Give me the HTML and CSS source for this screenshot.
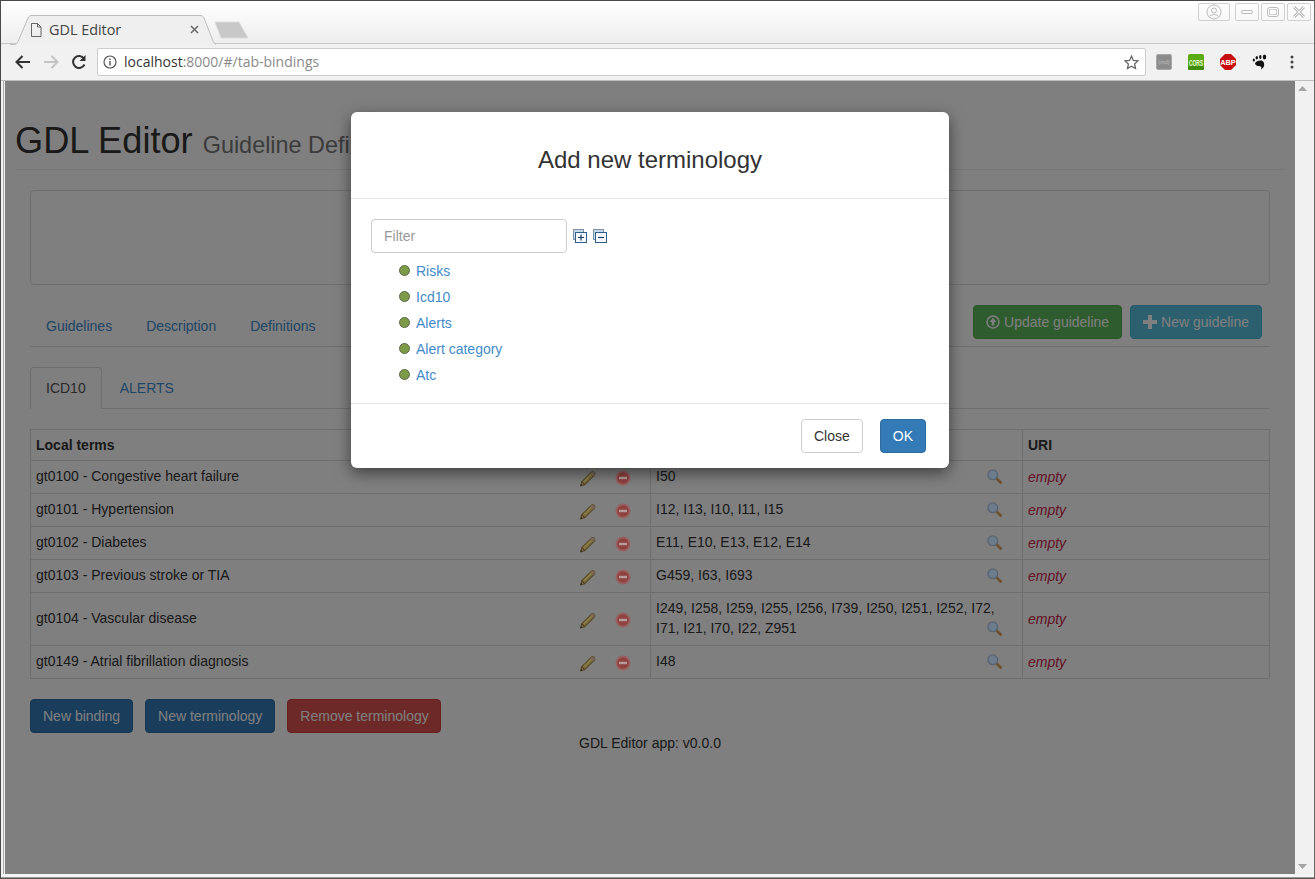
FILE: index.html
```html
<!DOCTYPE html>
<html lang="en">
<head>
    <meta charset="UTF-8">
    <meta name="viewport" content="width=device-width, initial-scale=1.0">
    <title>GDL Editor</title>
    <link rel="stylesheet" href="styles.css">
</head>
<body>
<div class="window">

    <div class="tabstrip">
        <div class="browser-tab">
            <svg class="tab-shape" width="206" height="30" viewBox="0 0 206 30"><path d="M0 29.500h4c2 0 3-1 4-3L18 3c1-2 2-2.500 4-2.500h168c2 0 3 .5 4 2.500l9 23c1 2 2 3.500 4 3.500" fill="#efefef" stroke="#bdbdbd"/></svg>
            <svg class="doc-icon" width="12" height="14" viewBox="0 0 12 14"><path d="M1.500.5h6l3.500 3.500v9.500h-9.500zM7.500.5v3.500h3.500" fill="none" stroke="#666"/></svg>
            <span class="tab-title">GDL Editor</span>
            <svg class="tab-close" width="9" height="9" viewBox="0 0 9 9"><path d="M1 1l7 7M8 1L1 8" stroke="#666" stroke-width="1.500"/></svg>
        </div>
        <svg class="new-tab" width="36" height="18" viewBox="0 0 36 18"><path d="M1 1h24l9 16H7z" fill="#c8c8c8" stroke="#dcdcdc"/></svg>
        <div class="win-controls">
            <div class="win-btn win-profile">
                <svg width="16" height="16" viewBox="0 0 16 16"><circle cx="8" cy="8" r="7" fill="none" stroke="#bbb"/><circle cx="8" cy="6.500" r="2.500" fill="none" stroke="#bbb"/><path d="M3.500 12.500c1-2.500 8-2.500 9 0" fill="none" stroke="#bbb"/></svg>
            </div>
            <div class="win-btn">
                <svg width="12" height="6" viewBox="0 0 12 6"><rect x=".5" y="1.500" width="11" height="3" rx="1.500" fill="none" stroke="#bbb"/></svg>
            </div>
            <div class="win-btn">
                <svg width="12" height="10" viewBox="0 0 12 10"><rect x=".5" y=".5" width="11" height="9" rx="2" fill="none" stroke="#bbb"/><rect x="2.500" y="2.500" width="7" height="5" fill="none" stroke="#ccc"/></svg>
            </div>
            <div class="win-btn">
                <svg width="12" height="12" viewBox="0 0 12 12"><path d="M1 1l10 10M11 1L1 11" stroke="#bbb" stroke-width="3"/><path d="M1 1l10 10M11 1L1 11" stroke="#fff" stroke-width="1"/></svg>
            </div>
        </div>
    </div>

    <div class="toolbar">
        <svg class="nav-icon" width="16" height="14" viewBox="0 0 16 14"><path d="M15 7H2M7.500 1L1.500 7l6 6" fill="none" stroke="#333" stroke-width="2"/></svg>
        <svg class="nav-icon" width="16" height="14" viewBox="0 0 16 14"><path d="M1 7h13M8.500 1l6 6-6 6" fill="none" stroke="#c4c4c4" stroke-width="2"/></svg>
        <svg class="nav-icon" width="16" height="16" viewBox="0 0 16 16"><path d="M13.500 10.500A6 6 0 1 1 13 4.500" fill="none" stroke="#333" stroke-width="2"/><path d="M14.500 1v6h-6z" fill="#333"/></svg>
        <div class="omnibox">
            <svg width="14" height="14" viewBox="0 0 14 14"><circle cx="7" cy="7" r="6" fill="none" stroke="#555" stroke-width="1.200"/><path d="M7 6v4.500M7 3.500v1.500" stroke="#555" stroke-width="1.400"/></svg>
            <span class="url"><span class="url-host">localhost</span>:8000/#/tab-bindings</span>
            <svg class="star" width="15" height="15" viewBox="0 0 15 15"><path d="M7.500 1.200l1.900 4.200 4.600.5-3.400 3.100.9 4.500-4-2.300-4 2.300.9-4.500L1 5.900l4.600-.5z" fill="none" stroke="#666" stroke-width="1.300"/></svg>
        </div>
        <div class="extensions">
            <svg width="16" height="16" viewBox="0 0 16 16"><rect width="15" height="15" x=".5" y=".5" rx="1.500" fill="#8c8c8c" stroke="#a8a8a8"/><text x="8" y="10" font-size="5.500" text-anchor="middle" fill="#bdbdbd" font-family="Liberation Sans">(md)</text></svg>
            <svg width="16" height="16" viewBox="0 0 16 16"><rect width="16" height="16" rx="2" fill="#5cab12"/><rect y="12" width="16" height="4" rx="1" fill="#418c08"/><text transform="translate(8 11.500) scale(.58 1)" font-size="8.500" font-weight="bold" text-anchor="middle" fill="#e8f5d8" font-family="Liberation Sans">CORS</text></svg>
            <svg width="16" height="16" viewBox="0 0 16 16"><path d="M5 0h6l5 5v6l-5 5H5l-5-5V5z" fill="#c70d0d"/><text x="8" y="11" font-size="7.400" font-weight="bold" text-anchor="middle" fill="#fff" font-family="Liberation Sans">ABP</text></svg>
            <svg width="16" height="16" viewBox="0 0 16 16"><path d="M3 9.500c1-3 7-4 8.500-1.500 1.500 3 .5 6-2.500 7.500 1-2 0-3.500-2-3.500-1.500 0-3.500-.5-4-2.500z" fill="#111"/><ellipse cx="1.800" cy="6" rx="1.100" ry="1.500" fill="#111"/><ellipse cx="4.800" cy="3.800" rx="1.200" ry="1.700" fill="#111"/><ellipse cx="8.300" cy="3" rx="1.200" ry="1.900" fill="#111"/><ellipse cx="12.500" cy="3" rx="1.700" ry="2.500" fill="#111"/></svg>
            <svg width="16" height="16" viewBox="0 0 16 16"><circle cx="8" cy="3" r="1.500" fill="#444"/><circle cx="8" cy="8" r="1.500" fill="#444"/><circle cx="8" cy="13" r="1.500" fill="#444"/></svg>
        </div>
    </div>

    <div class="content-row">
        <div class="viewport">
            <div class="page">
                <div class="page-header">
                    <h1>GDL Editor <small>Guideline Definition Language</small></h1>
                </div>
                <div class="main">
                    <div class="info-box"></div>

                    <div class="main-nav">
                        <ul class="tabs">
                            <li><a href="#">Guidelines</a></li>
                            <li><a href="#">Description</a></li>
                            <li><a href="#">Definitions</a></li>
                        </ul>
                        <div class="guideline-actions">
                            <a class="btn btn-success" href="#">
                                <svg width="14" height="14" viewBox="0 0 14 14"><circle cx="7" cy="7" r="6" fill="none" stroke="#fff" stroke-width="1.500"/><path d="M7 2.800L10.500 7H8.300v3.500H5.700V7H3.500z" fill="#fff"/></svg>
                                Update guideline</a>
                            <a class="btn btn-info" href="#">
                                <svg width="14" height="14" viewBox="0 0 14 14"><path d="M5 0h4v5h5v4H9v5H5V9H0V5h5z" fill="#fff"/></svg>
                                New guideline</a>
                        </div>
                    </div>

                    <ul class="tabs sub-tabs">
                        <li class="active"><a href="#">ICD10</a></li>
                        <li><a href="#">ALERTS</a></li>
                    </ul>

                    <table class="bindings">
                        <colgroup>
                            <col class="col-term">
                            <col class="col-codes">
                            <col class="col-uri">
                        </colgroup>
                        <thead>
                            <tr><th>Local terms</th><th>Codes</th><th>URI</th></tr>
                        </thead>
                        <tbody>
                            <tr>
                                <td><div class="term"><span class="term-name">gt0100 - Congestive heart failure</span>
                                    <svg class="ico-pencil" width="17" height="17" viewBox="0 0 18 18"><use href="#pencil"/></svg>
                                    <svg class="ico-remove" width="16" height="16" viewBox="0 0 16 16"><use href="#remove"/></svg></div></td>
                                <td class="codes"><svg class="ico-search" width="15" height="15" viewBox="0 0 16 16"><use href="#search"/></svg>I50</td>
                                <td class="uri">empty</td>
                            </tr>
                            <tr>
                                <td><div class="term"><span class="term-name">gt0101 - Hypertension</span>
                                    <svg class="ico-pencil" width="17" height="17" viewBox="0 0 18 18"><use href="#pencil"/></svg>
                                    <svg class="ico-remove" width="16" height="16" viewBox="0 0 16 16"><use href="#remove"/></svg></div></td>
                                <td class="codes"><svg class="ico-search" width="15" height="15" viewBox="0 0 16 16"><use href="#search"/></svg>I12, I13, I10, I11, I15</td>
                                <td class="uri">empty</td>
                            </tr>
                            <tr>
                                <td><div class="term"><span class="term-name">gt0102 - Diabetes</span>
                                    <svg class="ico-pencil" width="17" height="17" viewBox="0 0 18 18"><use href="#pencil"/></svg>
                                    <svg class="ico-remove" width="16" height="16" viewBox="0 0 16 16"><use href="#remove"/></svg></div></td>
                                <td class="codes"><svg class="ico-search" width="15" height="15" viewBox="0 0 16 16"><use href="#search"/></svg>E11, E10, E13, E12, E14</td>
                                <td class="uri">empty</td>
                            </tr>
                            <tr>
                                <td><div class="term"><span class="term-name">gt0103 - Previous stroke or TIA</span>
                                    <svg class="ico-pencil" width="17" height="17" viewBox="0 0 18 18"><use href="#pencil"/></svg>
                                    <svg class="ico-remove" width="16" height="16" viewBox="0 0 16 16"><use href="#remove"/></svg></div></td>
                                <td class="codes"><svg class="ico-search" width="15" height="15" viewBox="0 0 16 16"><use href="#search"/></svg>G459, I63, I693</td>
                                <td class="uri">empty</td>
                            </tr>
                            <tr>
                                <td><div class="term"><span class="term-name">gt0104 - Vascular disease</span>
                                    <svg class="ico-pencil" width="17" height="17" viewBox="0 0 18 18"><use href="#pencil"/></svg>
                                    <svg class="ico-remove" width="16" height="16" viewBox="0 0 16 16"><use href="#remove"/></svg></div></td>
                                <td class="codes">I249, I258, I259, I255, I256, I739, I250, I251, I252, I72,<br><svg class="ico-search" width="15" height="15" viewBox="0 0 16 16"><use href="#search"/></svg>I71, I21, I70, I22, Z951</td>
                                <td class="uri">empty</td>
                            </tr>
                            <tr>
                                <td><div class="term"><span class="term-name">gt0149 - Atrial fibrillation diagnosis</span>
                                    <svg class="ico-pencil" width="17" height="17" viewBox="0 0 18 18"><use href="#pencil"/></svg>
                                    <svg class="ico-remove" width="16" height="16" viewBox="0 0 16 16"><use href="#remove"/></svg></div></td>
                                <td class="codes"><svg class="ico-search" width="15" height="15" viewBox="0 0 16 16"><use href="#search"/></svg>I48</td>
                                <td class="uri">empty</td>
                            </tr>
                        </tbody>
                    </table>

                    <div class="table-actions">
                        <a class="btn btn-primary" href="#">New binding</a>
                        <a class="btn btn-primary" href="#">New terminology</a>
                        <a class="btn btn-danger" href="#">Remove terminology</a>
                    </div>
                    <p class="app-version">GDL Editor app: v0.0.0</p>
                </div>
            </div>

            <div class="backdrop"></div>

            <div class="modal">
                <div class="modal-header">
                    <h3>Add new terminology</h3>
                </div>
                <div class="modal-body">
                    <div class="filter-row">
                        <input class="filter" type="text" placeholder="Filter">
                        <svg width="14" height="14" viewBox="0 0 14 14"><rect x=".5" y=".5" width="10" height="10" fill="#c9d8e6" stroke="#7b93a8"/><rect x="2.500" y="3.500" width="11" height="10" fill="#f4f8fc" stroke="#2f5f8a"/><path d="M5 8.500h6M8 5.500v6" stroke="#123f6d" stroke-width="1.200"/></svg>
                        <svg class="collapse-all" width="14" height="14" viewBox="0 0 14 14"><rect x=".5" y=".5" width="10" height="10" fill="#c9d8e6" stroke="#7b93a8"/><rect x="2.500" y="3.500" width="11" height="10" fill="#f4f8fc" stroke="#2f5f8a"/><path d="M5 8.500h6" stroke="#123f6d" stroke-width="1.200"/></svg>
                    </div>
                    <ul class="tree">
                        <li><a href="#">Risks</a></li>
                        <li><a href="#">Icd10</a></li>
                        <li><a href="#">Alerts</a></li>
                        <li><a href="#">Alert category</a></li>
                        <li><a href="#">Atc</a></li>
                    </ul>
                </div>
                <div class="modal-footer">
                    <a class="btn btn-default" href="#">Close</a>
                    <a class="btn btn-primary" href="#">OK</a>
                </div>
            </div>
        </div>

        <div class="scrollbar">
            <svg width="9" height="5" viewBox="0 0 9 5"><path d="M4.500 0L9 5H0z" fill="#a3a3a3"/></svg>
            <svg width="9" height="5" viewBox="0 0 9 5"><path d="M0 0h9L4.500 5z" fill="#a3a3a3"/></svg>
        </div>
    </div>
    <div class="window-bottom"></div>

    <svg class="icon-defs" width="0" height="0">
        <defs>
            <g id="pencil">
                <path d="M3 12.500L13 2.500c1-1 2-1 3 0s1 2 0 3L6 15.500z" fill="#7d7040" stroke="#5c4c28" stroke-width="1.300"/>
                <path d="M5 12.500L14.500 3.500" stroke="#8c7e4a" stroke-width="1.500"/>
                <path d="M13 2.500c1-1 2-1 3 0s1 2 0 3l-1 1-3-3z" fill="#78665c"/>
                <path d="M3 12.500L1.500 17 6 15.500z" fill="#7c6f5a" stroke="#4a3a1c"/>
                <path d="M1.800 16.700l.6-2 1.400 1.400z" fill="#2c2210"/>
            </g>
            <g id="remove">
                <circle cx="8" cy="8" r="7.500" fill="#976260"/>
                <circle cx="8" cy="8" r="5.800" fill="#8f4240"/>
                <rect x="4" y="6.800" width="8" height="2.400" fill="#b89c9c"/>
            </g>
            <g id="search">
                <path d="M10.500 10.500l4 4" stroke="#6e5232" stroke-width="3" stroke-linecap="round"/>
                <circle cx="6.200" cy="6.200" r="5.200" fill="#6c7c8c" stroke="#5a6470" stroke-width="1.400"/>
            </g>
        </defs>
    </svg>
</div>
</body>
</html>
```

FILE: styles.css
```css
html, body {
    margin: 0;
    padding: 0;
}

body {
    font-family: "Liberation Sans", Arial, sans-serif;
    font-size: 14px;
    line-height: 20px;
    color: #333;
    background-color: #3c3c3c;
    overflow: hidden;
}

a {
    text-decoration: none;
    color: #428bca;
}

ul {
    list-style: none;
    margin: 0;
    padding: 0;
}

.icon-defs {
    position: absolute;
}

/* browser chrome */
.window {
    width: 1315px;
    height: 879px;
    box-sizing: border-box;
    display: flex;
    flex-direction: column;
    border: 1px solid #4a4a4a;
    border-bottom-color: #555;
    border-right-color: #666;
    background-color: #f1f1f1;
    overflow: hidden;
}

.tabstrip {
    height: 43px;
    box-sizing: border-box;
    display: flex;
    align-items: flex-end;
    padding-left: 9px;
    position: relative;
    border-bottom: 1px solid #c8c8c8;
    background: linear-gradient(#ffffff, #eeeeee);
}

.browser-tab {
    width: 206px;
    height: 29px;
    margin-bottom: -1px;
    display: flex;
    align-items: center;
    position: relative;
    font-family: "Open Sans", sans-serif;
    font-size: 14.4px;
    color: #444;
}

.tab-shape {
    position: absolute;
    left: 0;
    top: 0;
}

.doc-icon {
    position: relative;
    margin-left: 20px;
}

.tab-title {
    position: relative;
    margin-left: 7px;
    flex: 1;
}

.tab-close {
    position: relative;
    margin-right: 17px;
}

.new-tab {
    margin-bottom: 4px;
    margin-left: -2px;
}

.win-controls {
    margin-left: auto;
    align-self: flex-start;
    margin-top: 2px;
    margin-right: 3px;
    display: flex;
    gap: 2px;
}

.win-btn {
    width: 24px;
    height: 18px;
    box-sizing: border-box;
    border: 1px solid #d0d0d0;
    border-radius: 2px;
    display: flex;
    align-items: center;
    justify-content: center;
}

.win-profile {
    width: 32px;
    margin-right: 3px;
}

.toolbar {
    height: 37px;
    box-sizing: border-box;
    display: flex;
    align-items: center;
    padding-left: 14px;
    border-bottom: 1px solid #bdbdbd;
    background-color: #f1f1f1;
}

.nav-icon {
    margin-right: 12px;
}

.omnibox {
    width: 1049px;
    height: 28px;
    box-sizing: border-box;
    margin-left: -2px;
    display: flex;
    align-items: center;
    gap: 7px;
    padding: 0 6px 0 5px;
    background-color: #fff;
    border: 1px solid #ccc;
    border-radius: 2px;
}

.url {
    flex: 1;
    font-family: "Open Sans", sans-serif;
    font-size: 14px;
    color: #8a8a8a;
}

.url-host {
    color: #333;
}

.extensions {
    display: flex;
    gap: 16px;
    margin-left: 10px;
}

/* page area */
.content-row {
    flex: 1;
    display: flex;
    min-height: 0;
    margin-left: 2px;
    border-left: 1px solid #aaa;
}

.viewport {
    width: 1290px;
    margin-left: 1px;
    height: 793px;
    position: relative;
    overflow: hidden;
    background-color: #fff;
}

.scrollbar {
    width: 15px;
    height: 793px;
    display: flex;
    flex-direction: column;
    justify-content: space-between;
    align-items: center;
    box-sizing: border-box;
    padding: 5px 0;
    background-color: #f1f1f1;
}

.window-bottom {
    height: 3px;
    border-bottom: 1px solid #999;
    background-color: #f4f4f4;
}

.page {
    padding: 0 10px;
}

.page-header {
    margin-top: 40px;
    padding-bottom: 8px;
    border-bottom: 1px solid #eee;
}

h1 {
    margin: 0;
    font-size: 36.2px;
    font-weight: 500;
    line-height: 40px;
    color: #333;
}

h1 small {
    font-size: 23.4px;
    font-weight: 400;
    line-height: 1;
    color: #777;
}

.main {
    padding: 20px 15px 0;
}

.info-box {
    height: 93px;
    border: 1px solid #ddd;
    border-radius: 4px;
}

.main-nav {
    margin-top: 20px;
    display: flex;
    justify-content: space-between;
    align-items: flex-start;
    border-bottom: 1px solid #ddd;
}

.tabs {
    display: flex;
    gap: 2px;
}

.tabs a {
    display: block;
    padding: 10px 15px;
    border: 1px solid transparent;
    border-bottom: 0;
    border-radius: 4px 4px 0 0;
}

.guideline-actions {
    display: flex;
    gap: 8px;
    margin-right: 8px;
}

.sub-tabs {
    margin-top: 20px;
    border-bottom: 1px solid #ddd;
    height: 41px;
}

.sub-tabs a {
    height: 42px;
    box-sizing: border-box;
    background-color: transparent;
}

.sub-tabs .active a {
    color: #555;
    background-color: #fff;
    border-color: #ddd;
    padding-top: 10px;
}

.btn {
    display: inline-block;
    box-sizing: border-box;
    height: 34px;
    padding: 6px 12px;
    border: 1px solid transparent;
    border-radius: 4px;
    color: #fff;
    white-space: nowrap;
}

.btn svg {
    vertical-align: -2px;
}

.btn-success {
    background-color: #5cb85c;
    border-color: #4cae4c;
}

.btn-info {
    background-color: #5bc0de;
    border-color: #46b8da;
}

.btn-primary {
    background-color: #337ab7;
    border-color: #2e6da4;
}

.btn-danger {
    width: 154px;
    background-color: #d9534f;
    border-color: #d43f3a;
}

.btn-default {
    color: #333;
    background-color: #fff;
    border-color: #ccc;
}

/* bindings table */
.bindings {
    width: 1240px;
    margin-top: 20px;
    table-layout: fixed;
    border-collapse: collapse;
}

.col-term {
    width: 620px;
}

.col-codes {
    width: 372px;
}

.bindings th,
.bindings td {
    border: 1px solid #ddd;
    padding: 5px;
    text-align: left;
}

.bindings td {
    padding: 5px 5px 7px;
    color: #333;
}

.term {
    display: flex;
    align-items: center;
}

.term-name {
    flex: 1;
}

/* these bitmaps sit above the backdrop in the reference, so they stay lifted */
.ico-pencil,
.ico-remove,
.ico-search {
    position: relative;
    z-index: 1;
}

.ico-pencil {
    margin-right: 19px;
    top: 2px;
}

.ico-remove {
    margin-right: 14px;
    top: 2px;
}

.ico-search {
    float: right;
    margin: 3px 15px 0 0;
}

.uri {
    color: #c7254e;
    font-style: italic;
}

.bindings td.uri {
    color: #c7254e;
    padding: 6px 5px;
}

.table-actions {
    margin-top: 20px;
    display: flex;
    gap: 12px;
}

.app-version {
    margin: 0;
    text-align: center;
}

/* modal */
.backdrop {
    position: absolute;
    left: 0;
    top: 0;
    right: 0;
    bottom: 0;
    background-color: rgba(0, 0, 0, 0.5);
}

.modal {
    position: absolute;
    z-index: 2;
    left: 346px;
    top: 31px;
    width: 598px;
    background-color: #fff;
    border-radius: 6px;
    box-shadow: 0 5px 15px rgba(0, 0, 0, 0.5);
}

.modal-header {
    height: 87px;
    box-sizing: border-box;
    padding-top: 34px;
    border-bottom: 1px solid #e5e5e5;
}

.modal-header h3 {
    margin: 0;
    font-size: 24px;
    font-weight: 500;
    line-height: 28px;
    text-align: center;
    color: #333;
}

.modal-body {
    padding: 20px 20px 15px;
}

.filter-row {
    display: flex;
    align-items: center;
    gap: 7px;
}

.collapse-all {
    margin-left: -1px;
}

.filter {
    width: 196px;
    height: 34px;
    box-sizing: border-box;
    padding: 6px 12px;
    border: 1px solid #ccc;
    border-radius: 4px;
    font-family: "Liberation Sans", Arial, sans-serif;
    font-size: 14px;
    color: #555;
    margin-right: -1px;
}

.filter::placeholder {
    color: #999;
}

.tree {
    margin-top: 5px;
    padding-left: 28px;
}

.tree li {
    height: 26px;
    display: flex;
    align-items: center;
    gap: 6px;
}

.tree li::before {
    content: "";
    width: 9px;
    height: 9px;
    border-radius: 50%;
    border: 1px solid #5b6b4a;
    background-color: #7d9a48;
    margin-top: -2px;
}

.modal-footer {
    height: 65px;
    box-sizing: border-box;
    padding: 15px 23px 0 0;
    display: flex;
    justify-content: flex-end;
    gap: 17px;
    border-top: 1px solid #e5e5e5;
}
```
